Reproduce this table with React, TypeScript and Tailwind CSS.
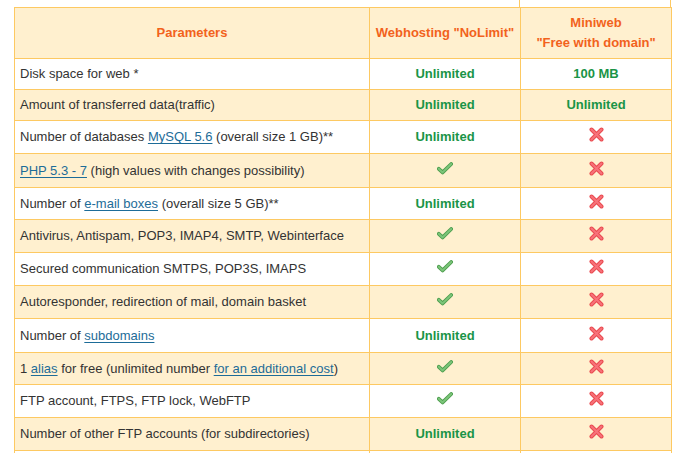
import React from "react";

const Check = () => (
  <svg width="16" height="13" viewBox="0 0 16 13" className="mb-[5px]">
    <path d="M1.8 6.8 L5.6 10.4 L14.2 2" fill="none" stroke="#4e9e4e" strokeWidth="3.8" strokeLinecap="round" strokeLinejoin="round" />
    <path d="M1.8 6.8 L5.6 10.4 L14.2 2" fill="none" stroke="#7cc57a" strokeWidth="2" strokeLinecap="round" strokeLinejoin="round" />
  </svg>
);

const Cross = () => (
  <svg width="15" height="15" viewBox="0 0 15 15" className="mb-[5px]">
    <path d="M2.5 2.5 L12.5 12.5 M12.5 2.5 L2.5 12.5" fill="none" stroke="#e94a4f" strokeWidth="4" strokeLinecap="round" />
    <path d="M2.5 2.5 L12.5 12.5 M12.5 2.5 L2.5 12.5" fill="none" stroke="#f7727a" strokeWidth="2" strokeLinecap="round" />
  </svg>
);

const L = ({ children }: { children: React.ReactNode }) => (
  <a className="text-[#1d6c98] underline underline-offset-2 decoration-[#1d6c98]">{children}</a>
);

const U = ({ t }: { t: string }) => <span className="font-bold text-[#1a9447]">{t}</span>;

type Row = { label: React.ReactNode; a: React.ReactNode; b: React.ReactNode; cls: string };

const rows: Row[] = [
  { label: "Disk space for web *", a: <U t="Unlimited" />, b: <U t="100 MB" />, cls: "h-[31px] bg-white" },
  { label: "Amount of transferred data(traffic)", a: <U t="Unlimited" />, b: <U t="Unlimited" />, cls: "h-[31px] bg-[#fff0cf]" },
  { label: <>Number of databases <L>MySQL 5.6</L> (overall size 1 GB)**</>, a: <U t="Unlimited" />, b: <Cross />, cls: "h-[33px] bg-white" },
  { label: <><L>PHP 5.3 - 7</L> (high values with changes possibility)</>, a: <Check />, b: <Cross />, cls: "h-[34px] bg-[#fff0cf]" },
  { label: <>Number of <L>e-mail boxes</L> (overall size 5 GB)**</>, a: <U t="Unlimited" />, b: <Cross />, cls: "h-[32px] bg-white" },
  { label: "Antivirus, Antispam, POP3, IMAP4, SMTP, Webinterface", a: <Check />, b: <Cross />, cls: "h-[33px] bg-[#fff0cf]" },
  { label: "Secured communication SMTPS, POP3S, IMAPS", a: <Check />, b: <Cross />, cls: "h-[33px] bg-white" },
  { label: "Autoresponder, redirection of mail, domain basket", a: <Check />, b: <Cross />, cls: "h-[33px] bg-[#fff0cf]" },
  { label: <>Number of <L>subdomains</L></>, a: <U t="Unlimited" />, b: <Cross />, cls: "h-[34px] bg-white" },
  { label: <>1 <L>alias</L> for free (unlimited number <L>for an additional cost</L>)</>, a: <Check />, b: <Cross />, cls: "h-[32px] bg-[#fff0cf]" },
  { label: "FTP account, FTPS, FTP lock, WebFTP", a: <Check />, b: <Cross />, cls: "h-[33px] bg-white" },
  { label: "Number of other FTP accounts (for subdirectories)", a: <U t="Unlimited" />, b: <Cross />, cls: "h-[33px] bg-[#fff0cf]" },
  { label: "", a: null, b: null, cls: "h-[33px] bg-white" },
];

export default function App() {
  return (
    <div className="w-[686px] h-[453px] overflow-hidden bg-white text-[13px] text-[#333333]" style={{ fontFamily: '"Liberation Sans", Arial, sans-serif' }}>
      <div className="ml-[14px] w-[658px]">
        <div className="flex h-[7px]">
          <div className="w-[506px] border-r border-[#fdc962]" />
          <div className="w-[151px] border-r border-[#fdc962]" />
        </div>
        <div className="border-l border-t border-[#fdc962]">
          <div className="flex h-[51px] bg-[#fff0cf] border-b border-[#fdc962] font-bold text-[#f2621c] leading-[20px]">
            <div className="w-[355px] border-r border-[#fdc962] flex items-center justify-center">Parameters</div>
            <div className="w-[151px] border-r border-[#fdc962] flex items-center justify-center">Webhosting "NoLimit"</div>
            <div className="w-[151px] border-r border-[#fdc962] flex flex-col items-center justify-center text-center">
              <span>Miniweb</span>
              <span>"Free with domain"</span>
            </div>
          </div>
          {rows.map((r, i) => (
            <div key={i} className={`flex border-b border-[#fdc962] ${r.cls}`}>
              <div className="w-[355px] border-r border-[#fdc962] flex items-center px-[5px] whitespace-nowrap">
                <span>{r.label}</span>
              </div>
              <div className="w-[151px] border-r border-[#fdc962] flex items-center justify-center">{r.a}</div>
              <div className="w-[151px] border-r border-[#fdc962] flex items-center justify-center">{r.b}</div>
            </div>
          ))}
        </div>
      </div>
    </div>
  );
}
